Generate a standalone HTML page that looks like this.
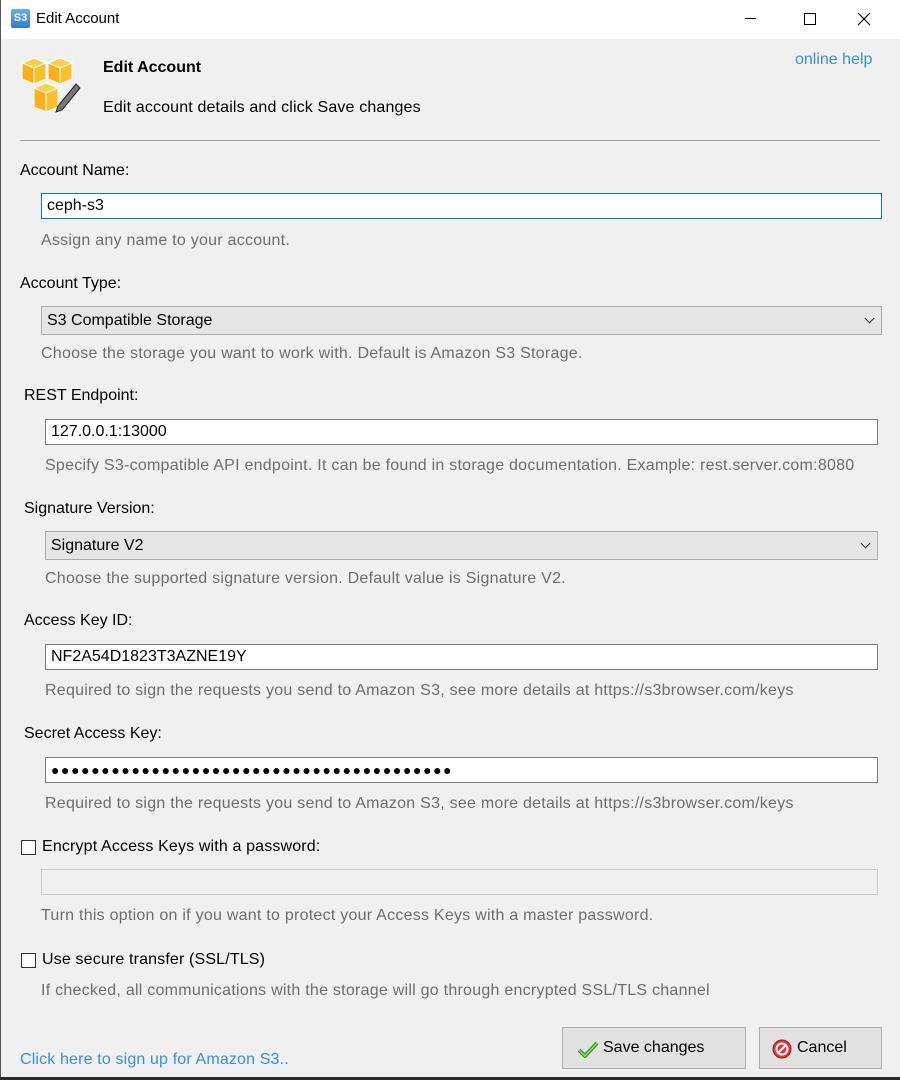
<!DOCTYPE html>
<html><head><meta charset="utf-8"><style>
*{margin:0;padding:0;box-sizing:border-box}
body{width:900px;height:1080px;background:#f0f0f0;font-family:"Liberation Sans",sans-serif;font-size:16px;color:#000;position:relative;overflow:hidden}
.a{position:absolute;white-space:nowrap}
.h{color:#6d6d6d;letter-spacing:0.25px}
.in{position:absolute;background:#fff;border:1px solid #7a7a7a;padding:0 0 0 5px;line-height:24px;height:26px}
.sel{position:absolute;background:#e5e5e5;border:1px solid #acacac;padding-left:5px;line-height:27px;height:29px}
.sel:after{content:"";position:absolute;right:8px;top:8px;width:6px;height:6px;border-right:1.5px solid #333;border-bottom:1.5px solid #333;transform:rotate(45deg)}
.cb{position:absolute;width:15px;height:15px;border:1px solid #333;background:#fff}
.btn{position:absolute;background:#e1e1e1;border:1px solid #adadad;line-height:40px;font-size:16px}
</style></head><body>
<div class="a" style="left:0;top:0;width:900px;height:39px;background:#fff"></div>
<div class="a" style="left:0;top:0;width:1px;height:1080px;background:#555"></div>
<div class="a" style="left:0;top:1077px;width:900px;height:3px;background:#2b2b2b"></div>
<div class="a" style="left:11px;top:9px;width:19px;height:19px;background:linear-gradient(#6aaee8,#2f7ad0);border-radius:2px;color:#fff;font-size:11px;font-weight:bold;text-align:center;line-height:19px">S3</div>
<div class="a" style="left:36px;top:10px;font-size:15px">Edit Account</div>
<div class="a" style="left:745px;top:18px;width:11px;height:1px;background:#000"></div>
<div class="a" style="left:804px;top:13px;width:12px;height:12px;border:1px solid #000"></div>
<svg class="a" style="left:857px;top:12px" width="14" height="14"><path d="M1 1L13 13M13 1L1 13" stroke="#000" stroke-width="1.2"/></svg>

<svg class="a" style="left:20px;top:56px" width="64" height="60" viewBox="0 0 64 60">
<g stroke="#fff" stroke-width="1">
<path d="M2 7L14 2L26 7L14 12Z" fill="#fcd14a"/><path d="M2 7L14 12V28L2 23Z" fill="#f6b01e"/><path d="M14 12L26 7V23L14 28Z" fill="#f9bf2c"/>
<path d="M28 7L40 2L52 7L40 12Z" fill="#fcd14a"/><path d="M28 7L40 12V28L28 23Z" fill="#f6b01e"/><path d="M40 12L52 7V23L40 28Z" fill="#f9bf2c"/>
<path d="M14 32L26 27L38 32L26 37Z" fill="#fcd14a"/><path d="M14 32L26 37V56L14 51Z" fill="#f6b01e"/><path d="M26 37L38 32V51L26 56Z" fill="#f9bf2c"/>
</g>
<path d="M38 50L56 28L60 32L42 54L36 56Z" fill="#777" stroke="#222"/>
</svg>
<div class="a" style="left:103px;top:59px;font-weight:bold;font-size:16px">Edit Account</div>
<div class="a" style="left:103px;top:99px;font-size:16px;letter-spacing:0.15px">Edit account details and click Save changes</div>
<div class="a" style="left:795px;top:51px;color:#3a8fd4;font-size:16px">online help</div>
<div class="a" style="left:20px;top:140px;width:860px;height:1px;background:#a0a0a0"></div>

<div class="a" style="left:20px;top:162px">Account Name:</div>
<div class="in" style="left:41px;top:193px;width:841px;border-color:#0078d7">ceph-s3</div>
<div class="a h" style="left:41px;top:232px">Assign any name to your account.</div>

<div class="a" style="left:20px;top:275px">Account Type:</div>
<div class="sel" style="left:41px;top:306px;width:841px">S3 Compatible Storage</div>
<div class="a h" style="left:41px;top:345px">Choose the storage you want to work with. Default is Amazon S3 Storage.</div>

<div class="a" style="left:24px;top:387px">REST Endpoint:</div>
<div class="in" style="left:45px;top:419px;width:833px">127.0.0.1:13000</div>
<div class="a h" style="left:45px;top:457px">Specify S3-compatible API endpoint. It can be found in storage documentation. Example: rest.server.com:8080</div>

<div class="a" style="left:24px;top:500px">Signature Version:</div>
<div class="sel" style="left:45px;top:531px;width:833px">Signature V2</div>
<div class="a h" style="left:45px;top:570px">Choose the supported signature version. Default value is Signature V2.</div>

<div class="a" style="left:24px;top:612px">Access Key ID:</div>
<div class="in" style="left:45px;top:644px;width:833px">NF2A54D1823T3AZNE19Y</div>
<div class="a h" style="left:45px;top:682px">Required to sign the requests you send to Amazon S3, see more details at https://s3browser.com/keys</div>

<div class="a" style="left:24px;top:725px">Secret Access Key:</div>
<div class="in" style="left:45px;top:757px;width:833px;font-size:14px;letter-spacing:1.6px">●●●●●●●●●●●●●●●●●●●●●●●●●●●●●●●●●●●●●●●●</div>
<div class="a h" style="left:45px;top:795px">Required to sign the requests you send to Amazon S3, see more details at https://s3browser.com/keys</div>

<div class="cb" style="left:21px;top:840px"></div>
<div class="a" style="left:42px;top:838px;font-size:16px;letter-spacing:0.15px">Encrypt Access Keys with a password:</div>
<div class="a" style="left:41px;top:869px;width:837px;height:26px;background:#f0f0f0;border:1px solid #ccc"></div>
<div class="a h" style="left:41px;top:907px">Turn this option on if you want to protect your Access Keys with a master password.</div>

<div class="cb" style="left:21px;top:953px"></div>
<div class="a" style="left:42px;top:951px;font-size:16px;letter-spacing:0.15px">Use secure transfer (SSL/TLS)</div>
<div class="a h" style="left:41px;top:982px">If checked, all communications with the storage will go through encrypted SSL/TLS channel</div>

<div class="a" style="left:20px;top:1051px;color:#3a8fd4;font-size:16px;letter-spacing:0.15px">Click here to sign up for Amazon S3..</div>

<div class="btn" style="left:562px;top:1027px;width:184px;height:42px">
<svg class="a" style="left:14px;top:12px" width="22" height="18"><path d="M2 10L8 16L20 3" stroke="#3a9a2a" stroke-width="4" fill="none"/><path d="M2 10L8 16L20 3" stroke="#8fd86a" stroke-width="1.5" fill="none"/></svg>
<span class="a" style="left:40px;top:0">Save changes</span></div>
<div class="btn" style="left:759px;top:1027px;width:123px;height:42px">
<svg class="a" style="left:11px;top:10px" width="22" height="22"><circle cx="11" cy="11" r="9" fill="#e8303a" stroke="#a01820"/><circle cx="11" cy="11" r="5.5" fill="none" stroke="#fff" stroke-width="2"/><path d="M7 15L15 7" stroke="#fff" stroke-width="2"/></svg>
<span class="a" style="left:37px;top:0">Cancel</span></div>
</body></html>
